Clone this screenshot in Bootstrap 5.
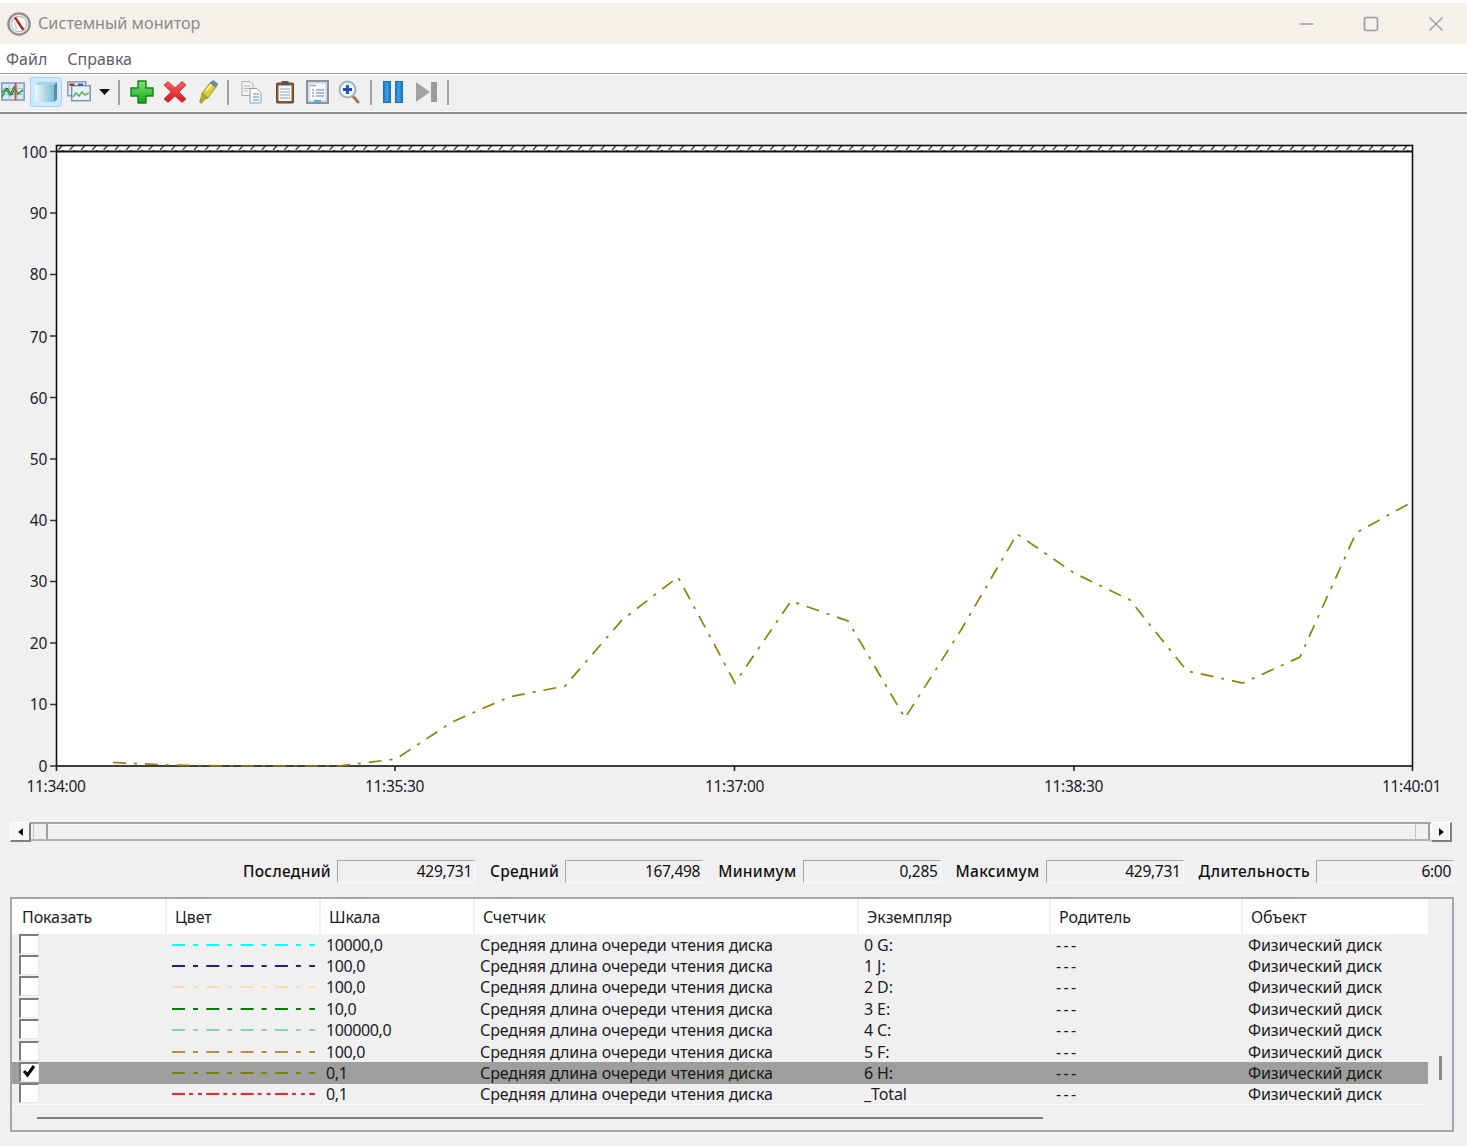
<!doctype html>
<html lang="ru">
<head>
<meta charset="utf-8">
<title>Системный монитор</title>
<link href="https://cdn.jsdelivr.net/npm/bootstrap@5.3.0/dist/css/bootstrap.min.css" rel="stylesheet">
<style>
html,body{height:100%}
body{background:#f0f0f0;font-family:"Noto Sans","Open Sans",sans-serif;font-size:16px;color:#1c1c24;overflow:hidden}
.pm-window{width:1467px;height:1146px;border-top:3px solid #fff}
.pm-title{height:41px;background:#f4f0ea;color:#8b8b8b;font-size:16.2px;padding-left:7px}
.pm-title-text{margin-left:7px}
.pm-winbtns{margin-right:23px}
.pm-winbtn{width:65px;height:16px;display:flex;justify-content:flex-end}
.pm-menu{height:29px;background:#fff;color:#5f5f66;padding-left:6px;gap:20px;font-size:16px}
.pm-toolbar{height:41px;padding-bottom:2px;background:#f0f0f0;border-top:1px solid #9a9a9a;border-bottom:2px solid #8e8e8e;box-shadow:inset 0 1px 0 #fff,inset 0 -1px 0 #fff;overflow:hidden}
.pm-tb-first{margin-left:-4px}
.pm-tb{width:33px;height:30px;display:flex;align-items:center;justify-content:center;flex:none}
.pm-tb-on{background:#cde8ff;border:1px solid #9fd3fb;border-radius:3px;width:32px;margin-left:1px}
.pm-tb-caret{width:18px;height:30px;display:flex;align-items:center;justify-content:center;flex:none}
.pm-nudge-l{margin-left:-2px}
.pm-nudge-r{margin-left:1px}
.pm-sep{width:2px;height:25px;background:#a2a2a2;flex:none}
.pm-s1{margin:0 5px 0 5px}
.pm-s2{margin:0 6px 0 3px}
.pm-s3{margin:0 4px 0 5px}
.pm-s4{margin:0 0 0 4px}
.pm-chart{display:block;width:1467px;height:708px}
.pm-chart text{font-family:"Noto Sans","Open Sans",sans-serif;font-size:15.5px;fill:#1c1c28;letter-spacing:-.3px}
.pm-scroll{height:20px;margin:0 15px 0 10px}
.pm-sbtn{width:21px;height:20px;background:#f6f6f6;border:1px solid #fff;border-right:2px solid #808080;border-bottom:2px solid #808080;flex:none}
.pm-track{flex:1 1 auto;height:19px;background:#f0f0f0;border-top:2px solid #a5a5a5;border-bottom:2px solid #b5b5b5;box-shadow:inset 0 1px 0 #fff;padding:0 1px 0 2px}
.pm-thumb{width:15px;height:15px;border-left:1px solid #c4c4c4;border-right:2px solid #a0a0a0;background:#f0f0f0;flex:none}
.pm-stats{margin-top:18px;height:23px;padding-right:13px;color:#111;font-size:15.5px}
.pm-stat{gap:6px;margin-left:15px}
.pm-label{font-weight:500;letter-spacing:.3px}
.pm-value{width:138px;height:23px;line-height:21px;text-align:right;padding-right:2px;background:#f0f0f0;border-top:1px solid #a8a8a8;border-left:1px solid #a8a8a8;border-right:1px solid #fafafa;border-bottom:1px solid #fafafa;letter-spacing:-.3px}
.pm-frame{position:relative;margin:14px 13px 0 10px;height:235px;border:2px solid #a3a8ac;background:#f0f0f0;overflow:hidden}
.pm-table{table-layout:fixed;width:1416px;margin:0;border-collapse:separate;border-spacing:0;--bs-table-bg:transparent;--bs-table-color:#1c1c24;color:#1c1c24}
.pm-table>thead>tr>th{height:35px;padding:0 0 0 8px;background:#fff;font-weight:400;vertical-align:middle;border:0;border-left:2px solid #f0f0f0;letter-spacing:-.1px}
.pm-table>thead>tr>th:first-child{border-left:0;padding-left:10px}
.pm-table>tbody>tr>td{height:21.4px;padding:0 0 0 7px;line-height:20px;border:0;background:#f0f0f0;box-shadow:none;white-space:nowrap;vertical-align:middle;letter-spacing:-.1px}
.pm-table>tbody>tr>td.pm-num{letter-spacing:-.4px}
.pm-table>tbody>tr>td.pm-dash{letter-spacing:2.3px}
.pm-table>tbody>tr.pm-sel>td{background:#9e9e9e;color:#1a1a12}
.pm-table>tbody>tr:last-child>td{border-bottom:1px solid #fafafa}
.pm-first{width:153px}.pm-w154{width:154px}.pm-w384{width:384px}.pm-w192{width:192px}.pm-w187{width:187px}
.pm-check{display:block;width:20px;height:20px;margin-top:-2px;background:#fff;border-top:2px solid #7c7c7c;border-left:2px solid #7c7c7c;border-right:1px solid #e8e8e8;border-bottom:1px solid #e8e8e8}
.pm-line{display:block;width:143px;height:2px}
.pm-hbar{position:absolute;left:25px;top:218px;width:1006px;height:2px;background:#7e7e7e}
.pm-vbar{position:absolute;left:1427px;top:157px;width:3px;height:24px;background:#8a8a8a}
</style>
</head>
<body>
<div class="pm-window d-flex flex-column">
  <div class="pm-title d-flex align-items-center">
    <svg width="24" height="24" viewBox="0 0 24 24"><circle cx="12" cy="12" r="10.6" fill="#f1eee9" stroke="#8f8f8f" stroke-width="2.4"/><circle cx="12" cy="12" r="7.6" fill="#fbfaf8" stroke="#bdbdbd" stroke-width="1.2"/><path d="M8 5.500 16.500 18" stroke="#b02820" stroke-width="2.400"/><path d="M7.500 10 9.500 17" stroke="#c9c9c9" stroke-width="1.300"/></svg>
    <span class="pm-title-text">Системный монитор</span>
    <div class="pm-winbtns d-flex ms-auto align-items-center">
      <div class="pm-winbtn"><svg width="15" height="16" viewBox="0 0 15 16"><path d="M.5 8h14" stroke="#9a9a9a" stroke-width="1.4"/></svg></div>
      <div class="pm-winbtn"><svg width="16" height="16" viewBox="0 0 16 16"><rect x="1.500" y="1.500" width="13" height="13" rx="2" fill="none" stroke="#9a9a9a" stroke-width="1.600"/></svg></div>
      <div class="pm-winbtn"><svg width="16" height="16" viewBox="0 0 16 16"><path d="M1.500 1.500l13 13M14.500 1.500l-13 13" stroke="#9a9a9a" stroke-width="1.300"/></svg></div>
    </div>
  </div>
  <div class="pm-menu d-flex align-items-center"><span>Файл</span><span>Справка</span></div>
  <div class="pm-toolbar d-flex align-items-center">
    <div class="pm-tb pm-tb-first"><svg width="24" height="20" viewBox="0 0 24 20"><rect x=".8" y="1" width="22.400" height="17" fill="#dce7f3" stroke="#7d97bb" stroke-width="1.500"/><path d="M1 6.500h22M1 12.500h22M8 1v17M16 1v17" stroke="#a3b9d4" stroke-width=".9"/><path d="M1 10l5-4 5 7 4-9" fill="none" stroke="#24306e" stroke-width="1"/><path d="M1 15l4-8 4 6 4-8 4 7 5-4" fill="none" stroke="#33a533" stroke-width="1.700"/><path d="M14.500 1v17" stroke="#d7473a" stroke-width="1.800"/></svg></div>
    <div class="pm-tb pm-tb-on"><svg width="24" height="22" viewBox="0 0 24 22"><defs><linearGradient id="cb" x1="0" x2="1"><stop offset="0" stop-color="#eef8fc"/><stop offset="1" stop-color="#68b5cf"/></linearGradient></defs><path d="M1 4 4 1h19v17l-3 3H1z" fill="url(#cb)"/><path d="M1 4 4 1h19l-3 3z" fill="#a9d3e6"/><path d="M20 4l3-3v17l-3 3z" fill="#5b8aa5"/></svg></div>
    <div class="pm-tb"><svg width="24" height="22" viewBox="0 0 24 22"><rect x=".8" y=".8" width="18" height="14" fill="#dfe7f0" stroke="#8398b4" stroke-width="1.400"/><rect x="4.700" y="4.700" width="18.500" height="15" fill="#eef2f7" stroke="#7a90ae" stroke-width="1.400"/><rect x="2.500" y="2.500" width="5" height="2.400" fill="#a8323a"/><rect x="11" y="2.500" width="5" height="2.400" fill="#2d62c8"/><path d="M6 16l3-4 3 3 3-4 3 3 4-2" fill="none" stroke="#5cb35c" stroke-width="1.500"/></svg></div>
    <div class="pm-tb-caret"><svg width="11" height="6" viewBox="0 0 11 6"><path d="M0 0h11L5.500 6z" fill="#111"/></svg></div>
    <div class="pm-sep pm-s1"></div>
    <div class="pm-tb"><svg width="24" height="24" viewBox="0 0 24 24"><defs><linearGradient id="gp" x1="0" y1="0" x2="0" y2="1"><stop offset="0" stop-color="#7fe37a"/><stop offset="1" stop-color="#15a31a"/></linearGradient></defs><path d="M8 1h8v7h7v8h-7v7H8v-7H1V8h7z" fill="url(#gp)" stroke="#0d8a14" stroke-width="1.400" stroke-linejoin="round"/></svg></div>
    <div class="pm-tb"><svg width="24" height="24" viewBox="0 0 24 24"><defs><linearGradient id="rx" x1="0" y1="0" x2="0" y2="1"><stop offset="0" stop-color="#f2635c"/><stop offset="1" stop-color="#d9181c"/></linearGradient></defs><path d="M5 1.500 12 8l7-6.500 4 3.500-7 7 7 7-4 3.500-7-6.500-7 6.500L1 19l7-7-7-7z" fill="url(#rx)" stroke="#c8302e" stroke-width=".8" stroke-linejoin="round"/></svg></div>
    <div class="pm-tb"><svg width="20" height="24" viewBox="0 0 20 24"><path d="M4 13 12 3l6 4-8 11z" fill="#d8cf35" stroke="#8d8a2a" stroke-width=".8"/><path d="M8 11l6-7" stroke="#fff59a" stroke-width="1.800"/><path d="M12 3l3-2.500L20 4l-2 3z" fill="#6f8aa3" stroke="#5a7188" stroke-width=".6"/><path d="M4 13l6 5-4 2-2.500 3.500-2-1.500L3 18z" fill="#b5ad25" stroke="#85821f" stroke-width=".6"/></svg></div>
    <div class="pm-sep pm-s2"></div>
    <div class="pm-tb"><svg width="21" height="23" viewBox="0 0 21 23"><path d="M1 .5h8l3 3v11H1z" fill="#f4f4f4" stroke="#a9a9a9"/><path d="M3 5h7M3 7.500h7M3 10h4" stroke="#b5b5b5"/><path d="M9 7.500h7l4 4v10.500H9z" fill="#fafbfd" stroke="#8d9cb0"/><path d="M12 13h6M12 16h6" stroke="#5a8fc4"/><path d="M12 19h6" stroke="#67b4e3" stroke-width="1.400"/></svg></div>
    <div class="pm-tb"><svg width="20" height="24" viewBox="0 0 20 24"><rect x="1.500" y="3" width="17" height="20" rx="1" fill="#8d5a32" stroke="#6e4423"/><rect x="3.500" y="5.500" width="13" height="15.500" fill="#f6f8fa"/><path d="M5 9h10M5 12h10M5 15h10M5 18h10" stroke="#8fa7bd"/><rect x="6.500" y="1" width="7" height="4" fill="#555"/></svg></div>
    <div class="pm-tb"><svg width="23" height="24" viewBox="0 0 23 24"><rect x="1" y="1" width="21" height="22" fill="#e4e8ec" stroke="#7f8a96" stroke-width="1.800"/><rect x="3" y="3" width="17" height="18" fill="#f8f9fa" stroke="#b7c0c9" stroke-width=".8"/><path d="M4 5.500h6" stroke="#9aa7b4" stroke-width="1.400"/><path d="M6 10h2M10 10h8M6 13h2M10 13h8M6 16h2M10 16h8" stroke="#6d7f90"/><path d="M8 21h7" stroke="#46b6e8" stroke-width="2.200"/></svg></div>
    <div class="pm-tb pm-nudge-l"><svg width="22" height="24" viewBox="0 0 22 24"><path d="M14 15l6 7" stroke="#a77a4c" stroke-width="3" stroke-linecap="round"/><circle cx="9.500" cy="9.500" r="8" fill="#eef6fb" stroke="#9ab4c6" stroke-width="2"/><path d="M9.500 5v9M5 9.500h9" stroke="#1b4fb5" stroke-width="2.800"/></svg></div>
    <div class="pm-sep pm-s3"></div>
    <div class="pm-tb"><svg width="20" height="22" viewBox="0 0 20 22"><defs><linearGradient id="pb" x1="0" x2="1"><stop offset="0" stop-color="#1a76c6"/><stop offset=".5" stop-color="#3aa3e8"/><stop offset="1" stop-color="#1a6fbb"/></linearGradient></defs><rect x=".5" y=".5" width="7" height="21" fill="url(#pb)" stroke="#1c6fb8"/><rect x="12.500" y=".5" width="7" height="21" fill="url(#pb)" stroke="#1c6fb8"/></svg></div>
    <div class="pm-tb pm-nudge-r"><svg width="21" height="20" viewBox="0 0 21 20"><path d="M0 0l14 10L0 20z" fill="#a3a3a3"/><rect x="15" y="0" width="6" height="20" fill="#9b9b9b"/></svg></div>
    <div class="pm-sep pm-s4"></div>
  </div>

  <svg class="pm-chart" viewBox="0 114 1467 708">
    <defs><pattern id="hatch" width="11.300" height="6" patternUnits="userSpaceOnUse"><path d="M2 6 7 0" stroke="#222" stroke-width="1.200"/></pattern></defs>
    <rect x="56.500" y="145.500" width="1356" height="620.500" fill="#fff"/>
    <rect x="56.500" y="145.500" width="1356" height="6" fill="url(#hatch)"/>
    <path d="M56.500 151.500H1412.500" stroke="#111" stroke-width="2"/>
    <rect x="56.500" y="145.500" width="1356" height="620.500" fill="none" stroke="#111" stroke-width="1.600"/>
    <path d="M50 151.500h6M50 213h6M50 274.500h6M50 336h6M50 397.500h6M50 459h6M50 520.500h6M50 581.500h6M50 643h6M50 704.500h6M50 766h6" stroke="#333" stroke-width="1.400"/>
    <path d="M395 766v5M734.500 766v5M1074 766v5M1412.500 766v5M56.500 766v5" stroke="#222" stroke-width="1.600"/>
    <polyline points="113,762.500 169.500,765 226,766 283,766 339,766 396,759 452,722 509,697 565,686 622,620 678,577 735,683 791,601 848,621 905,718 961,630 1017,534 1074,573 1130,600 1187,671 1243,683 1300,657 1356,533 1412,502" fill="none" stroke="#868606" stroke-width="1.700" stroke-dasharray="13 8 3 8"/>
    <g text-anchor="end">
      <text x="47" y="158">100</text><text x="47" y="219">90</text><text x="47" y="280">80</text><text x="47" y="342.500">70</text><text x="47" y="404">60</text><text x="47" y="465">50</text><text x="47" y="526">40</text><text x="47" y="587">30</text><text x="47" y="649">20</text><text x="47" y="710">10</text><text x="47" y="771.500">0</text>
    </g>
    <g text-anchor="middle">
      <text x="56" y="792">11:34:00</text><text x="394.500" y="792">11:35:30</text><text x="734.500" y="792">11:37:00</text><text x="1073.500" y="792">11:38:30</text><text x="1411.500" y="792">11:40:01</text>
    </g>
  </svg>

  <div class="pm-scroll d-flex">
    <div class="pm-sbtn d-flex align-items-center justify-content-center"><svg width="5" height="8" viewBox="0 0 5 8"><path d="M5 0v8L0 4z" fill="#111"/></svg></div>
    <div class="pm-track d-flex justify-content-between"><div class="pm-thumb"></div><div class="pm-thumb"></div></div>
    <div class="pm-sbtn d-flex align-items-center justify-content-center"><svg width="5" height="8" viewBox="0 0 5 8"><path d="M0 0v8l5-4z" fill="#111"/></svg></div>
  </div>

  <div class="pm-stats d-flex justify-content-end">
    <div class="pm-stat d-flex align-items-center"><span class="pm-label">Последний</span><div class="pm-value">429,731</div></div>
    <div class="pm-stat d-flex align-items-center"><span class="pm-label">Средний</span><div class="pm-value">167,498</div></div>
    <div class="pm-stat d-flex align-items-center"><span class="pm-label">Минимум</span><div class="pm-value">0,285</div></div>
    <div class="pm-stat d-flex align-items-center"><span class="pm-label">Максимум</span><div class="pm-value">429,731</div></div>
    <div class="pm-stat d-flex align-items-center"><span class="pm-label">Длительность</span><div class="pm-value">6:00</div></div>
  </div>

  <div class="pm-frame">
    <table class="table pm-table">
      <colgroup><col class="pm-first"><col class="pm-w154"><col class="pm-w154"><col class="pm-w384"><col class="pm-w192"><col class="pm-w192"><col class="pm-w187"></colgroup>
      <thead><tr><th>Показать</th><th>Цвет</th><th>Шкала</th><th>Счетчик</th><th>Экземпляр</th><th>Родитель</th><th>Объект</th></tr></thead>
      <tbody>
        <tr><td><span class="pm-check"></span></td><td><svg class="pm-line"><line x1="0" y1="1" x2="143" y2="1" stroke="#00ffff" stroke-width="2" stroke-dasharray="13 8 5 8.300"/></svg></td><td class="pm-num">10000,0</td><td>Средняя длина очереди чтения диска</td><td>0 G:</td><td class="pm-dash">---</td><td>Физический диск</td></tr>
        <tr><td><span class="pm-check"></span></td><td><svg class="pm-line"><line x1="0" y1="1" x2="143" y2="1" stroke="#20208c" stroke-width="2" stroke-dasharray="13 8 5 8.300"/></svg></td><td class="pm-num">100,0</td><td>Средняя длина очереди чтения диска</td><td>1 J:</td><td class="pm-dash">---</td><td>Физический диск</td></tr>
        <tr><td><span class="pm-check"></span></td><td><svg class="pm-line"><line x1="0" y1="1" x2="143" y2="1" stroke="#f5deb3" stroke-width="2" stroke-dasharray="13 8 5 8.300"/></svg></td><td class="pm-num">100,0</td><td>Средняя длина очереди чтения диска</td><td>2 D:</td><td class="pm-dash">---</td><td>Физический диск</td></tr>
        <tr><td><span class="pm-check"></span></td><td><svg class="pm-line"><line x1="0" y1="1" x2="143" y2="1" stroke="#008000" stroke-width="2" stroke-dasharray="13 8 5 8.300"/></svg></td><td class="pm-num">10,0</td><td>Средняя длина очереди чтения диска</td><td>3 E:</td><td class="pm-dash">---</td><td>Физический диск</td></tr>
        <tr><td><span class="pm-check"></span></td><td><svg class="pm-line"><line x1="0" y1="1" x2="143" y2="1" stroke="#7fd6b6" stroke-width="2" stroke-dasharray="13 8 5 8.300"/></svg></td><td class="pm-num">100000,0</td><td>Средняя длина очереди чтения диска</td><td>4 C:</td><td class="pm-dash">---</td><td>Физический диск</td></tr>
        <tr><td><span class="pm-check"></span></td><td><svg class="pm-line"><line x1="0" y1="1" x2="143" y2="1" stroke="#b8902f" stroke-width="2" stroke-dasharray="13 8 5 8.300"/></svg></td><td class="pm-num">100,0</td><td>Средняя длина очереди чтения диска</td><td>5 F:</td><td class="pm-dash">---</td><td>Физический диск</td></tr>
        <tr class="pm-sel"><td><span class="pm-check"><svg width="16" height="15" viewBox="0 0 16 15" class="d-block"><path d="M3 7l3.500 4L13 2" fill="none" stroke="#000" stroke-width="3"/></svg></span></td><td><svg class="pm-line"><line x1="0" y1="1" x2="143" y2="1" stroke="#808000" stroke-width="2" stroke-dasharray="13 8 5 8.300"/></svg></td><td class="pm-num">0,1</td><td>Средняя длина очереди чтения диска</td><td>6 H:</td><td class="pm-dash">---</td><td>Физический диск</td></tr>
        <tr><td><span class="pm-check"></span></td><td><svg class="pm-line"><line x1="0" y1="1" x2="143" y2="1" stroke="#ff2020" stroke-width="2" stroke-dasharray="13 4 4 5 4 4.300"/></svg></td><td class="pm-num">0,1</td><td>Средняя длина очереди чтения диска</td><td>_Total</td><td class="pm-dash">---</td><td>Физический диск</td></tr>
      </tbody>
    </table>
    <div class="pm-hbar"></div>
    <div class="pm-vbar"></div>
  </div>
</div>
</body>
</html>
